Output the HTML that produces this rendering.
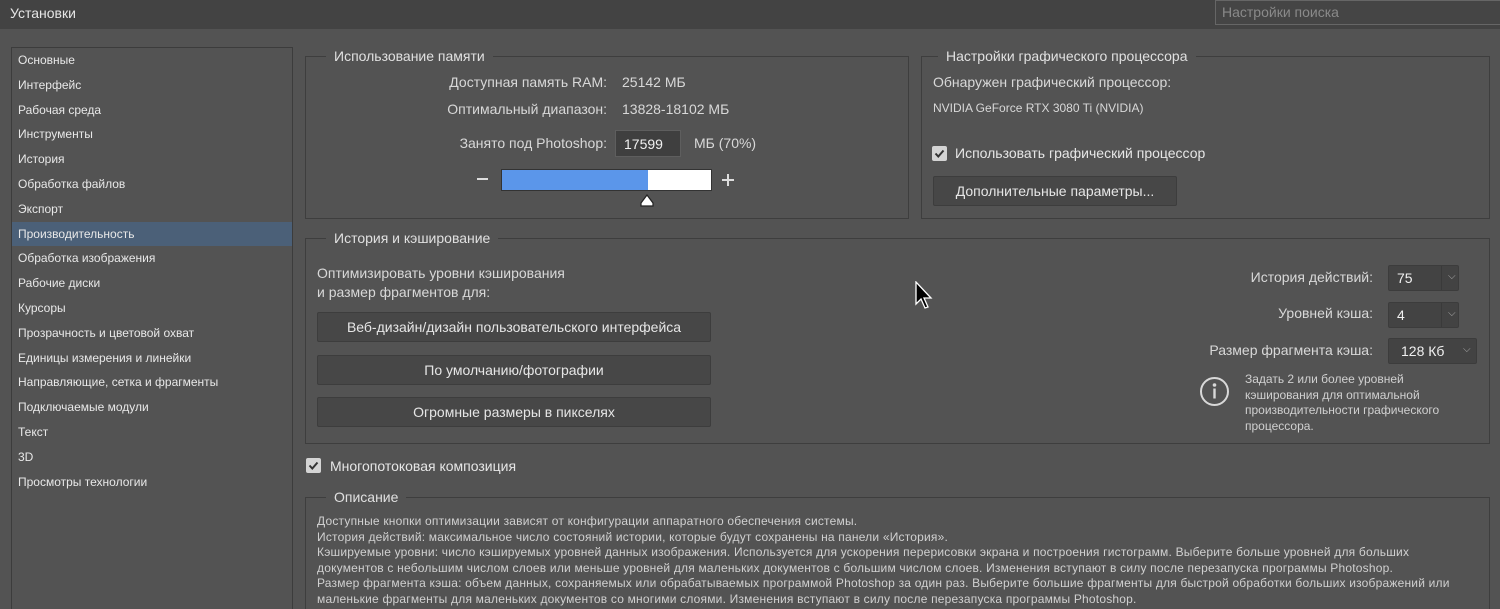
<!DOCTYPE html>
<html style="width:1500px;height:609px;overflow:hidden"><head><meta charset="utf-8"><style>
*{margin:0;padding:0;box-sizing:border-box}
body{width:1500px;height:609px;overflow:hidden;background:#535353;font-family:"Liberation Sans","DejaVu Sans",sans-serif;color:#d8d8d8;position:relative}
.a{position:absolute;white-space:nowrap}
.title{left:0;top:0;width:1500px;height:29px;background:#434343}
.fs{position:absolute;border:1px solid #3e3e3e}
.lg{position:absolute;background:#535353;padding:0 8px;font-size:14px;top:-9px;line-height:16px;color:#e0e0e0}
.side{left:11px;top:47px;width:282px;height:570px;border:1px solid #3c3c3c;background:#535353}
.side div{height:24.8px;line-height:24.8px;padding-left:6px;font-size:12px;color:#e8e8e8}
.side .sel{background:#4b6078}
.btn{position:absolute;background:#474747;border:1px solid #3d3d3d;border-radius:2px;text-align:center;font-size:14px;color:#e6e6e6}
.dd{position:absolute;background:#434343;border:1px solid #3c3c3c;border-radius:2px;font-size:14px;color:#f0f0f0;padding-left:8px;line-height:24px}
.cb{position:absolute;width:15px;height:15px;background:#d4d4d4;border-radius:2px}
.t14{font-size:14px}
.t12{font-size:12px}
</style></head><body>
<div class="a title"></div>
<div class="a t14" style="left:10px;top:5px;font-size:14px;color:#e6e6e6">Установки</div>
<div class="a" style="left:1215px;top:0;width:290px;height:25px;border:1px solid #666;background:#454545;font-size:14px;color:#8a8a8a;padding:3px 6px">Настройки поиска</div>

<div class="a side">
<div style="margin-top:0">Основные</div><div>Интерфейс</div><div>Рабочая среда</div><div>Инструменты</div><div>История</div><div>Обработка файлов</div><div>Экспорт</div><div class="sel">Производительность</div><div>Обработка изображения</div><div>Рабочие диски</div><div>Курсоры</div><div>Прозрачность и цветовой охват</div><div>Единицы измерения и линейки</div><div>Направляющие, сетка и фрагменты</div><div>Подключаемые модули</div><div>Текст</div><div>3D</div><div>Просмотры технологии</div>
</div>

<div class="fs" style="left:305px;top:56px;width:604px;height:163px"><div class="lg" style="left:20px">Использование памяти</div></div>
<div class="a t14" style="right:893px;top:74px">Доступная память RAM:</div>
<div class="a t14" style="left:622px;top:74px">25142 МБ</div>
<div class="a t14" style="right:893px;top:101px">Оптимальный диапазон:</div>
<div class="a t14" style="left:622px;top:101px">13828-18102 МБ</div>
<div class="a t14" style="right:893px;top:135px">Занято под Photoshop:</div>
<div class="a t14" style="left:615px;top:130px;width:66px;height:27px;background:#3f3f3f;border:1px solid #5e5e5e;padding:5px 8px;color:#f0f0f0">17599</div>
<div class="a t14" style="left:694px;top:135px">МБ (70%)</div>
<div class="a" style="left:477px;top:178px;width:11px;height:2px;background:#ddd"></div>
<div class="a" style="left:501px;top:169px;width:211px;height:22px;border:1px solid #333;background:#fff"><div style="width:146px;height:20px;background:#5b96ea"></div></div>
<div class="a" style="left:722px;top:179px;width:12px;height:2px;background:#ddd"></div>
<div class="a" style="left:727px;top:174px;width:2px;height:12px;background:#ddd"></div>
<svg class="a" style="left:639px;top:193px" width="16" height="15"><path d="M2 13 L2 10 L8 2 L14 10 L14 13 Z" fill="#fff" stroke="#222" stroke-width="1.2"/></svg>

<div class="fs" style="left:921px;top:56px;width:569px;height:163px"><div class="lg" style="left:16px">Настройки графического процессора</div></div>
<div class="a t14" style="left:933px;top:74px">Обнаружен графический процессор:</div>
<div class="a t12" style="left:933px;top:101px">NVIDIA GeForce RTX 3080 Ti (NVIDIA)</div>
<div class="cb" style="left:932px;top:146px"></div>
<svg class="a" style="left:932px;top:146px" width="15" height="15"><path d="M3.5 7.5 L6.3 10.5 L11.5 4.5" fill="none" stroke="#333" stroke-width="2"/></svg>
<div class="a t14" style="left:955px;top:145px;color:#e6e6e6">Использовать графический процессор</div>
<div class="btn" style="left:933px;top:176px;width:244px;height:30px;line-height:28px">Дополнительные параметры...</div>

<div class="fs" style="left:305px;top:238px;width:1185px;height:206px"><div class="lg" style="left:20px">История и кэширование</div></div>
<div class="a t14" style="left:317px;top:264px;line-height:19px">Оптимизировать уровни кэширования<br>и размер фрагментов для:</div>
<div class="btn" style="left:317px;top:312px;width:394px;height:30px;line-height:28px">Веб-дизайн/дизайн пользовательского интерфейса</div>
<div class="btn" style="left:317px;top:355px;width:394px;height:30px;line-height:28px">По умолчанию/фотографии</div>
<div class="btn" style="left:317px;top:397px;width:394px;height:30px;line-height:28px">Огромные размеры в пикселях</div>

<div class="a t14" style="right:127px;top:269px">История действий:</div>
<div class="dd" style="left:1388px;top:265px;width:71px;height:26px">75<span style="position:absolute;left:52px;top:0;width:1px;height:24px;background:#3a3a3a"></span><span style="position:absolute;left:59px;top:-1px;font-size:10px;color:#aaa">⌵</span></div>
<div class="a t14" style="right:127px;top:305px">Уровней кэша:</div>
<div class="dd" style="left:1388px;top:302px;width:71px;height:26px">4<span style="position:absolute;left:52px;top:0;width:1px;height:24px;background:#3a3a3a"></span><span style="position:absolute;left:59px;top:-1px;font-size:10px;color:#aaa">⌵</span></div>
<div class="a t14" style="right:127px;top:342px">Размер фрагмента кэша:</div>
<div class="dd" style="left:1388px;top:338px;width:89px;height:26px;padding-left:12px">128 Кб<span style="position:absolute;left:74px;top:-1px;font-size:10px;color:#aaa">⌵</span></div>
<svg class="a" style="left:1199px;top:376px" width="31" height="31"><circle cx="15.5" cy="15.5" r="13.5" fill="none" stroke="#d8d8d8" stroke-width="2"/><circle cx="15.5" cy="9" r="1.8" fill="#d8d8d8"/><rect x="14.3" y="12.5" width="2.4" height="10" fill="#d8d8d8"/></svg>
<div class="a t12" style="left:1245px;top:372px;line-height:15.5px;color:#d0d0d0">Задать 2 или более уровней<br>кэширования для оптимальной<br>производительности графического<br>процессора.</div>

<div class="cb" style="left:306px;top:458px"></div>
<svg class="a" style="left:306px;top:458px" width="15" height="15"><path d="M3.5 7.5 L6.3 10.5 L11.5 4.5" fill="none" stroke="#333" stroke-width="2"/></svg>
<div class="a t14" style="left:330px;top:458px;color:#e6e6e6">Многопотоковая композиция</div>

<div class="fs" style="left:305px;top:497px;width:1185px;height:130px"><div class="lg" style="left:20px">Описание</div></div>
<div class="a t12" style="left:317px;top:514px;line-height:15.6px;color:#d0d0d0;letter-spacing:0.2px">Доступные кнопки оптимизации зависят от конфигурации аппаратного обеспечения системы.<br>История действий: максимальное число состояний истории, которые будут сохранены на панели «История».<br>Кэшируемые уровни: число кэшируемых уровней данных изображения. Используется для ускорения перерисовки экрана и построения гистограмм. Выберите больше уровней для больших<br>документов с небольшим числом слоев или меньше уровней для маленьких документов с большим числом слоев. Изменения вступают в силу после перезапуска программы Photoshop.<br>Размер фрагмента кэша: объем данных, сохраняемых или обрабатываемых программой Photoshop за один раз. Выберите большие фрагменты для быстрой обработки больших изображений или<br>маленькие фрагменты для маленьких документов со многими слоями. Изменения вступают в силу после перезапуска программы Photoshop.</div>

<svg class="a" style="left:915px;top:281px" width="22" height="32"><path d="M1 1 L1 23 L6 18 L10 27 L13 26 L9 17 L16 17 Z" fill="#000" stroke="#fff" stroke-width="1.3"/></svg>
</body></html>
